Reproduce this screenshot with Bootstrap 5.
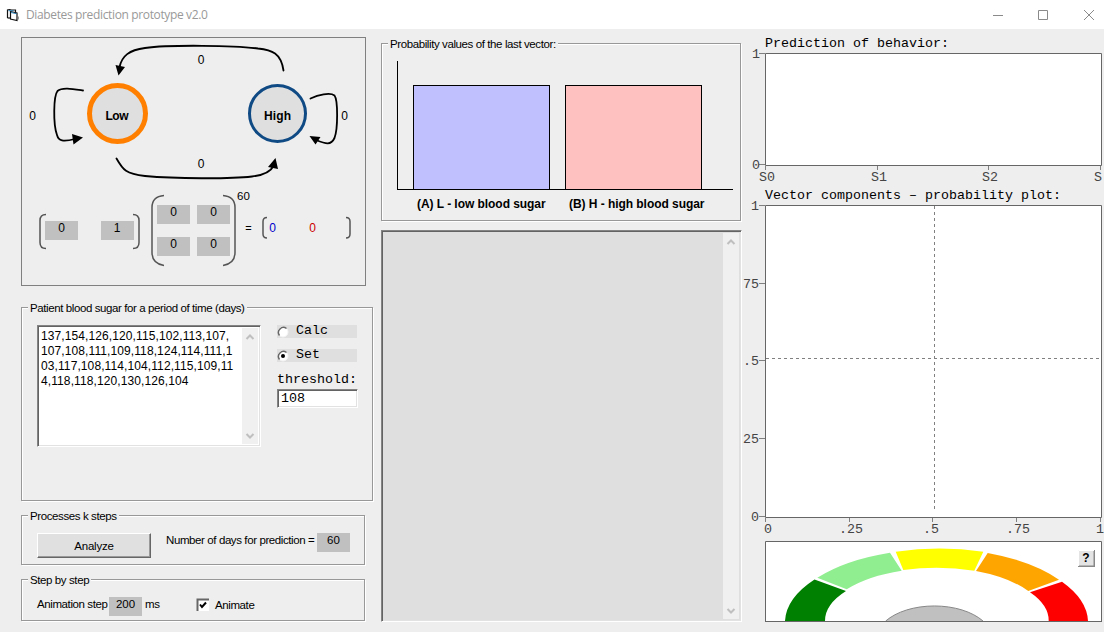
<!DOCTYPE html>
<html lang="en">
<head>
<meta charset="utf-8">
<title>Diabetes prediction prototype v2.0</title>
<link href="https://cdn.jsdelivr.net/npm/bootstrap@5.3.0/dist/css/bootstrap.min.css" rel="stylesheet">
<style>
body{width:1104px;height:632px;overflow:hidden;background:#eee;color:#000;font:11.5px/13px "Liberation Sans",Arial,sans-serif;letter-spacing:-.4px}
svg{display:block;flex:none;overflow:visible;letter-spacing:0}
svg text{font-family:"Liberation Sans",Arial,sans-serif}
.titlebar{height:29px;background:#fff;padding:0 9px 0 6px}
.caption{font:12px/16px "Open Sans",sans-serif;color:#999;letter-spacing:-.36px;margin-left:6px}
.left-col{width:381px;padding:8px 0 0 21px}
.mid-col{width:360px;padding-top:14px}
.right-col{width:363px}
.diagram{width:345px;height:249px;border:1px solid #808080}
.group{border:1px solid #989898;box-shadow:1px 1px 0 #fff,inset 1px 1px 0 #fff}
.group-title{display:block;width:max-content;margin:-6px 0 0 6px;padding:0 2px;background:#eee;white-space:nowrap;height:12px;line-height:12px}
.g-blood{width:352px;height:194px;margin-top:21px}
.g-steps{width:344px;height:50px;margin-top:14px}
.g-anim{width:344px;height:42px;margin-top:14px}
.g-prob{width:360px;height:178px}
.sunken{border:1px solid;border-color:#848484 #fff #fff #848484;box-shadow:inset 1px 1px 0 #636363,inset -1px -1px 0 #e2e2e2}
.data-box{width:224px;height:122px;background:#fff;margin:11px 0 0 15px;padding:2px}
.data-text{font-size:12px;line-height:15px;letter-spacing:.1px;padding:1px 0 0 1px;width:204px;white-space:nowrap}
.scroll{width:16px;background:#f0f0f0;padding:6px 0 5px}
.mono{font-family:"Liberation Mono","Courier New",monospace;font-size:13.33px;line-height:14px;letter-spacing:0}
.options{margin-left:16px;padding-top:11px}
.opt{width:80px;height:13px;background:#dfdfdf;gap:7px;line-height:12px}
.opt span{margin-top:-1px}
.opt+.opt{margin-top:11px}
.threshold{margin:11px 0 2px}
.field{width:81px;height:19px;background:#fff;padding:2px 3px}
.value{width:33px;height:19px;background:#c0c0c0;text-align:center;line-height:15px;letter-spacing:0}
.push{width:114px;height:25px;margin:11px 0 0 15px;background:#e0e0e0;border:1px solid;border-color:#fff #666 #666 #fff;box-shadow:inset -1px -1px 0 #999;line-height:24px;text-align:center;letter-spacing:-.2px}
.days{margin:12px 4px 0 15px;width:147px}
.anim-row{padding:11px 0 0 15px}
.axes{width:336px;height:129px;border-left:1px solid #000;border-bottom:1px solid #000;margin:11px 0 0 15px;gap:15px;padding-left:15px}
.bar{width:137px;border:1px solid #000;border-bottom:0}
.bar-low{background:#c0c0ff}
.bar-high{background:#ffc0c0}
.names{font-weight:700;font-size:12px;letter-spacing:-.05px;margin-top:8px;padding-left:35px;white-space:nowrap}
.names span{width:152px}
.list{width:361px;height:392px;margin-top:9px;background:#dfdfdf;padding:2px}
.heading{margin-left:24px;white-space:pre;height:23px;padding-top:8px}
.heading-low{height:16px;padding-top:1px}
</style>
</head>
<body>
<header class="titlebar d-flex align-items-center">
  <svg width="14" height="14" viewBox="0 0 14 14"><path d="M1.500 10V2l2-.5 2 .5h4v2" fill="#fff" stroke="#111" stroke-width="1.200"/><path d="M1.500 10h3" stroke="#111" stroke-width="1.200"/><path d="M4.500 3.500l6.500 1.500v7.500l-6.500-1.500z" fill="#fff" stroke="#111" stroke-width="1.200"/><path d="M2.500 2.700h5M5 4.500l5.500 1.200" stroke="#2a80b8"/><path d="M12.500 8.500v3" stroke="#999"/></svg>
  <span class="caption">Diabetes prediction prototype v2.0</span>
  <svg class="ms-auto" width="104" height="12" viewBox="991 7 104 12" fill="none" stroke="#8a8a8a"><path d="M993 13.500h10M1038.500 8.500h9v9h-9zM1084 8l10 10M1094 8l-10 10"/></svg>
</header>
<main class="d-flex">
  <section class="left-col">
    <div class="diagram">
      <svg width="343" height="247" viewBox="22 38 343 247" font-size="12" text-anchor="middle">
        <g fill="none" stroke="#000" stroke-width="1.800" stroke-linecap="round">
          <path d="M283.500 70.500C281 53 272 50 258 48.500C235 45.500 170 44.500 145 48C129 50 122 56 119.500 67"/>
          <path d="M116.500 158.500C123 170 126 174 145 176C175 178.800 230 179 252 176.500C265 175 271 171 273.500 166"/>
          <path d="M83 90.500C73 89 62 87 57.500 91C53.500 96 53 124 57 135C58.500 141 63 142 75 139"/>
          <path d="M310.500 98.500C318 95 330 92 334.500 95.500C338 100 338 129 334.500 138C331 145.500 326 144 316 140"/>
        </g>
        <path d="M115.500 65l9.500 2-6.500 8.500zM268 167l7.500-9 2.500 11zM72 134l11 3.500-9.500 7zM309.500 136l11 1-5 7.500z"/>
        <circle cx="117.500" cy="113.500" r="28" fill="#dfdfdf" stroke="#ff8000" stroke-width="5"/>
        <circle cx="277.500" cy="113.500" r="28" fill="#dfdfdf" stroke="#104a84" stroke-width="3"/>
        <g font-weight="700" font-size="12"><text x="117" y="120" textLength="23">Low</text><text x="277.500" y="120" textLength="27">High</text></g>
        <text x="201" y="64">0</text><text x="201" y="168">0</text><text x="32.500" y="120">0</text><text x="344.500" y="120">0</text>
        <path fill="#c0c0c0" d="M45 221h33v19h-33zM101 221h33v19h-33zM157 205h33v19h-33zM197 205h33v19h-33zM157 237h33v19h-33zM197 237h33v19h-33z"/>
        <g fill="none" stroke="#555" stroke-width="1.500">
          <path d="M46 214.500q-6 0-6 6v22q0 6 6 6M133 214.500q6 0 6 6v22q0 6-6 6M164 195.500q-12 1-12 12v45q0 11 12 13M223 195.500q12 1 12 12v45q0 11-12 13M267 217.500q-4 0-4 4v12.500q0 4 4 4M346 217.500q4 0 4 4v12.500q0 4-4 4"/>
        </g>
        <text x="61.500" y="232">0</text><text x="117" y="232">1</text>
        <text x="173.500" y="216">0</text><text x="213.500" y="216">0</text><text x="173.500" y="248">0</text><text x="213.500" y="248">0</text>
        <text x="243.500" y="200" font-size="11.500">60</text><text x="248.500" y="232" font-size="11">=</text>
        <text x="272.500" y="232" fill="#00c">0</text><text x="312.500" y="232" fill="#c00">0</text>
      </svg>
    </div>
    <div class="group g-blood">
      <span class="group-title">Patient blood sugar for a period of time (days)</span>
      <div class="d-flex">
        <div class="data-box sunken d-flex">
          <div class="data-text">137,154,126,120,115,102,113,107,<br>107,108,111,109,118,124,114,111,1<br>03,117,108,114,104,112,115,109,11<br>4,118,118,120,130,126,104</div>
          <div class="scroll d-flex flex-column justify-content-between align-items-center">
            <svg width="8" height="6" viewBox="0 0 8 6"><path d="M0.500 5L4 1.500 7.500 5" fill="none" stroke="#bfbfbf" stroke-width="2"/></svg>
            <svg width="8" height="6" viewBox="0 0 8 6"><path d="M0.500 1L4 4.500 7.500 1" fill="none" stroke="#bfbfbf" stroke-width="2"/></svg>
          </div>
        </div>
        <div class="mono options">
          <div class="opt d-flex align-items-center"><svg width="12" height="12" viewBox="0 0 12 12"><circle cx="6" cy="6" r="5" fill="#fff" stroke="#f4f4f4"/><path d="M2.500 9.500A5 5 0 0 1 9.500 2.500" fill="none" stroke="#666" stroke-width="1.500"/></svg><span>Calc</span></div>
          <div class="opt d-flex align-items-center"><svg width="12" height="12" viewBox="0 0 12 12"><circle cx="6" cy="6" r="5" fill="#fff" stroke="#f4f4f4"/><path d="M2.500 9.500A5 5 0 0 1 9.500 2.500" fill="none" stroke="#666" stroke-width="1.500"/><circle cx="6" cy="6" r="2"/></svg><span>Set</span></div>
          <div class="threshold">threshold:</div>
          <div class="field sunken">108</div>
        </div>
      </div>
    </div>
    <div class="group g-steps">
      <span class="group-title">Processes k steps</span>
      <div class="d-flex">
        <div class="push">Analyze</div>
        <span class="days text-nowrap">Number of days for prediction =</span>
        <div class="value" style="margin-top:11px">60</div>
      </div>
    </div>
    <div class="group g-anim">
      <span class="group-title">Step by step</span>
      <div class="anim-row d-flex">
        <span style="margin-top:1px;width:72px" class="text-nowrap">Animation step</span>
        <div class="value">200</div>
        <span style="margin:1px 0 0 3px;width:52px">ms</span>
        <svg width="12" height="12" viewBox="0 0 12 12" style="margin-top:2px"><path fill="#fff" d="M0 0h12v12H0z"/><path d="M.5 12V.5H12" fill="none" stroke="#666" stroke-width="2"/><path d="M3 5.500l2 2.500 4-4.500" fill="none" stroke="#000" stroke-width="2"/></svg>
        <span style="margin:2px 0 0 6px">Animate</span>
      </div>
    </div>
  </section>
  <section class="mid-col">
    <div class="group g-prob">
      <span class="group-title">Probability values of the last vector:</span>
      <div class="axes d-flex align-items-end">
        <div class="bar bar-low" style="height:104px"></div>
        <div class="bar bar-high" style="height:104px"></div>
      </div>
      <div class="names d-flex"><span>(A) L - low blood sugar</span><span>(B) H - high blood sugar</span></div>
    </div>
    <div class="list sunken d-flex justify-content-end">
      <div class="scroll d-flex flex-column justify-content-between align-items-center">
        <svg width="8" height="6" viewBox="0 0 8 6"><path d="M0.500 5L4 1.500 7.500 5" fill="none" stroke="#bfbfbf" stroke-width="2"/></svg>
        <svg width="8" height="6" viewBox="0 0 8 6"><path d="M0.500 1L4 4.500 7.500 1" fill="none" stroke="#bfbfbf" stroke-width="2"/></svg>
      </div>
    </div>
  </section>
  <section class="right-col">
    <div class="mono heading">Prediction of behavior:</div>
    <svg class="ms-auto" width="362" height="136" viewBox="742 52 362 136">
      <path d="M765.500 53.500h336v112h-336z" fill="#fff" stroke="#666"/>
      <path d="M759 53.500h6M759 164.500h6M765.500 166v4M877.500 166v4M988.500 166v4M1100.500 166v4" stroke="#808080"/>
      <g fill="#444"><text class="mono" x="752" y="58">1</text><text class="mono" x="752" y="169">0</text><text class="mono" x="759" y="181">S0</text><text class="mono" x="871" y="181">S1</text><text class="mono" x="982" y="181">S2</text><text class="mono" x="1094" y="181">S</text></g>
    </svg>
    <div class="mono heading heading-low">Vector components – probability plot:</div>
    <svg class="ms-auto" width="362" height="336" viewBox="742 204 362 336">
      <path d="M765.500 205.500h336v312h-336z" fill="#fff" stroke="#666"/>
      <path d="M759 205.500h6M759 283.500h6M759 360.500h6M759 438.500h6M759 516.500h6M765.500 518v4M849.500 518v4M932.500 518v4M1016.500 518v4M1100.500 518v4" stroke="#808080"/>
      <path d="M766 358.500h334M934.500 206v303" stroke="#808080" stroke-dasharray="3 3"/>
      <g fill="#444"><text class="mono" x="751" y="210">1</text><text class="mono" x="743" y="288">75</text><text class="mono" x="743" y="365">.5</text><text class="mono" x="743" y="443">25</text><text class="mono" x="751" y="521">0</text>
      <text class="mono" x="764" y="533">0</text><text class="mono" x="839" y="533">.25</text><text class="mono" x="923" y="533">.5</text><text class="mono" x="1006" y="533">.75</text><text class="mono" x="1096" y="533">1</text></g>
    </svg>
    <svg class="ms-auto" width="362" height="84" viewBox="742 540 362 84">
      <path d="M765.500 541.500h336v80h-336z" fill="#fff" stroke="#666"/>
      <path fill="#008000" d="M785 621A152 73 0 0 1 814.500 579.500L846 591A112 51 0 0 0 825 621z"/>
      <path fill="#90ee90" d="M817.300 577.700A152 73 0 0 1 890 552.700L901.700 570.700A112 51 0 0 0 846.700 589.300z"/>
      <path fill="#ff0" d="M895.700 551.700A152 73 0 0 1 983.300 551.700L974.300 570.700A112 51 0 0 0 903.300 570z"/>
      <path fill="#ffa500" d="M987.700 553A152 73 0 0 1 1059 579.700L1028.300 591A112 51 0 0 0 976 571z"/>
      <path fill="#f00" d="M1062 581.700A152 73 0 0 1 1088 621H1048.700A112 51 0 0 0 1030 592.300z"/>
      <path fill="#c0c0c0" stroke="#888" d="M885.700 621A58 33 0 0 1 983 621"/>
      <path d="M765 621.500h337" stroke="#666"/>
      <path fill="#888" d="M1078 550h17v17h-17z"/><path fill="#e4e4e4" d="M1078 550h15.500v15.500h-15.500z"/><path d="M1078.500 566v-15.500h15.500" fill="none" stroke="#fff"/>
      <text x="1086" y="562" font-size="12" font-weight="700" text-anchor="middle">?</text>
    </svg>
  </section>
</main>
<script src="https://cdn.jsdelivr.net/npm/bootstrap@5.3.0/dist/js/bootstrap.bundle.min.js"></script>
</body>
</html>
